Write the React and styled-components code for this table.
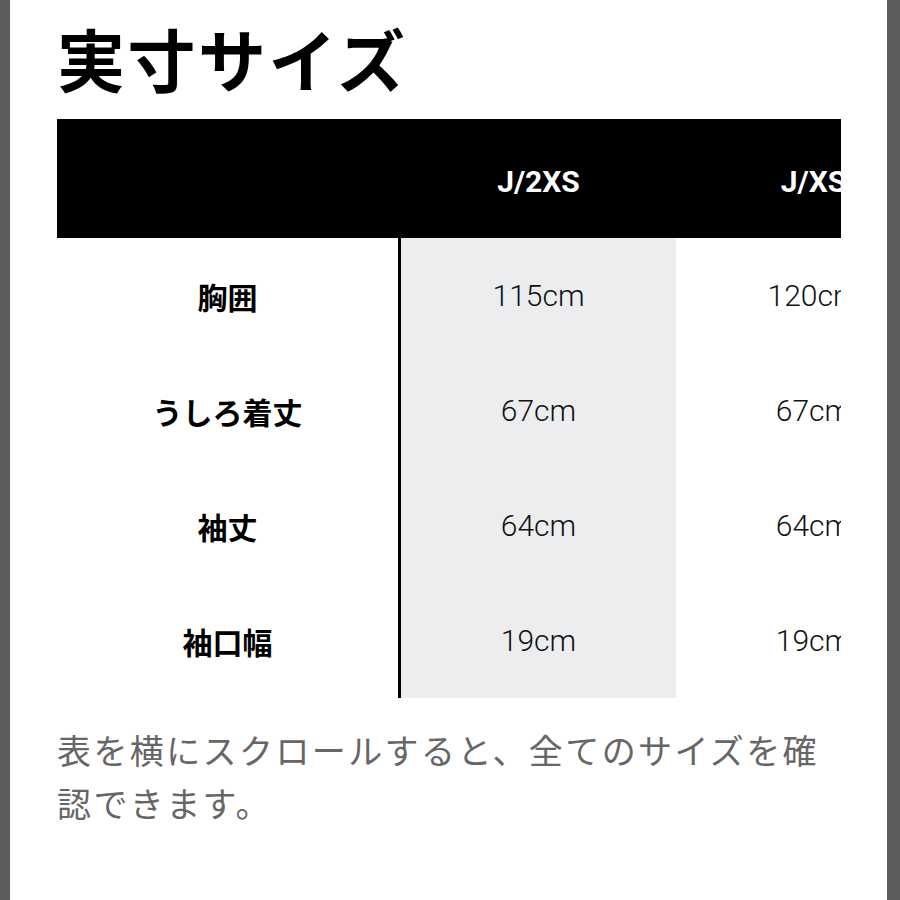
import styled, { createGlobalStyle } from "styled-components"

const GlobalStyle = createGlobalStyle`
    html, body {
        margin: 0;
        padding: 0;
        background: #fff;
    }
    body {
        font-family: "Noto Sans CJK JP", "Noto Sans", sans-serif;
    }
`

const sizes = ["J/2XS", "J/XS", "J/S"]

const rows = [
    { label: "胸囲", values: ["115cm", "120cm", "125cm"] },
    { label: "うしろ着丈", values: ["67cm", "67cm", "69cm"] },
    { label: "袖丈", values: ["64cm", "64cm", "66cm"] },
    { label: "袖口幅", values: ["19cm", "19cm", "20cm"] },
]

export default function App() {
    return (
        <>
            <GlobalStyle />
            <Screen>
                <Edge side="left" />
                <Page>
                    <Title>実寸サイズ</Title>
                    <TableScroll>
                        <SizeTable>
                            <HeadCell label />
                            {sizes.map((s) => (
                                <HeadCell key={s}>{s}</HeadCell>
                            ))}
                            {rows.map((row) => (
                                <Row key={row.label} row={row} />
                            ))}
                        </SizeTable>
                    </TableScroll>
                    <Note>表を横にスクロールすると、全てのサイズを確認できます。</Note>
                </Page>
                <Edge side="right" />
            </Screen>
        </>
    )
}

const Row = ({ row }) => (
    <>
        <LabelCell>{row.label}</LabelCell>
        {row.values.map((v, i) => (
            <ValueCell key={i} highlight={i === 0}>
                {v}
            </ValueCell>
        ))}
    </>
)

const Screen = styled.div`
    display: flex;
    min-height: 900px;
    width: 900px;
`

const Edge = styled.div`
    flex: 0 0 ${(p) => (p.side === "left" ? "10px" : "13px")};
    background: #5c5c5c;
`

const Page = styled.main`
    flex: 1;
    min-width: 0;
    padding: 24px 0 0 47px;
`

const Title = styled.h1`
    margin: 0 0 27px;
    font-family: "Noto Sans CJK JP", sans-serif;
    font-size: 68px;
    line-height: 68px;
    font-weight: 700;
    color: #000;
    letter-spacing: 2.5px;
`

const TableScroll = styled.div`
    width: 784px;
    overflow: hidden;
`

const SizeTable = styled.div`
    display: grid;
    grid-template-columns: 344px 275px 275px 275px;
    grid-template-rows: 119px repeat(4, 115px);
    width: max-content;
`

const HeadCell = styled.div`
    background: #000;
    color: #fff;
    display: flex;
    align-items: center;
    justify-content: center;
    padding-top: 5px;
    box-sizing: border-box;
    font-family: Roboto, "Liberation Sans", sans-serif;
    font-weight: 700;
    font-size: 30px;
`

const LabelCell = styled.div`
    display: flex;
    align-items: center;
    justify-content: center;
    box-sizing: border-box;
    border-right: 3px solid #000;
    font-family: "Noto Sans CJK JP", sans-serif;
    font-weight: 700;
    font-size: 30px;
    color: #000;
`

const ValueCell = styled.div`
    display: flex;
    align-items: center;
    justify-content: center;
    background: ${(p) => (p.highlight ? "#ebedef" : "#fff")};
    font-family: Roboto, "Liberation Sans", sans-serif;
    font-weight: 300;
    font-size: 30px;
    color: #111;
    white-space: nowrap;
`

const Note = styled.p`
    margin: 25px 0 0;
    width: 790px;
    font-family: "Noto Sans CJK JP", sans-serif;
    font-size: 34px;
    line-height: 53px;
    letter-spacing: 2.4px;
    color: #666;
`
